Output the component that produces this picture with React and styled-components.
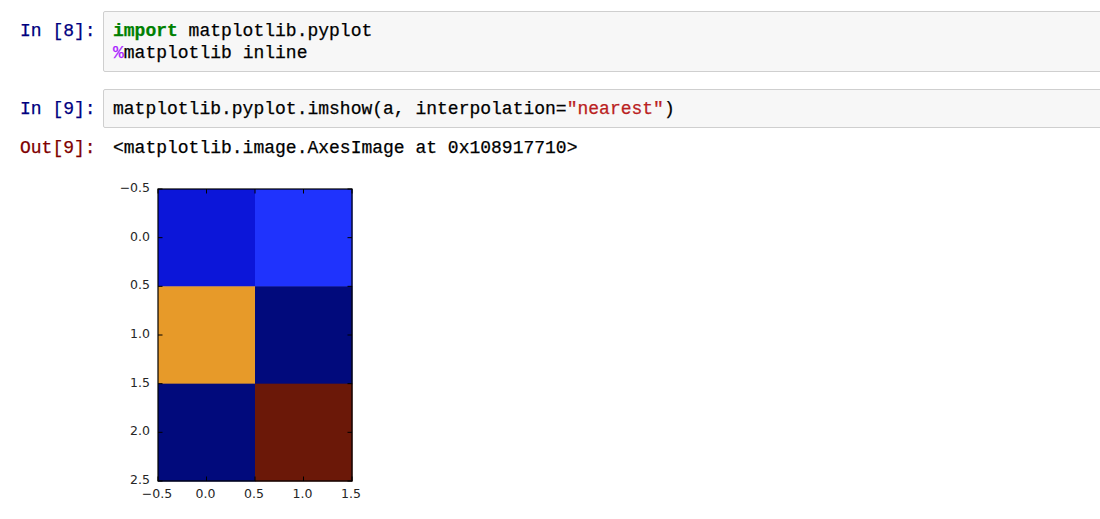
import styled, { createGlobalStyle } from "styled-components";

const GlobalStyle = createGlobalStyle`
  html, body {
    margin: 0;
    padding: 0;
    background: #fff;
    overflow: hidden;
  }
`;

const mono = `"Liberation Mono", "Courier New", monospace`;

const Notebook = styled.div`
  width: 1130px;
  padding: 11px 0 0 20px;
  font-family: ${mono};
  font-size: 18px;
  line-height: 22px;
  color: #000;
  -webkit-text-stroke: 0.25px currentColor;
`;

const Cell = styled.div`
  display: flex;
  align-items: flex-start;
  margin-bottom: ${props => props.gap || 0}px;
`;

const Prompt = styled.div`
  width: 83px;
  flex-shrink: 0;
  padding-top: ${props => props.top || 0}px;
  color: ${props => (props.out ? "#800000" : "#000080")};
  white-space: pre;
`;

const InputArea = styled.div`
  flex: 1;
  background: #f7f7f7;
  border: 1px solid #cfcfcf;
  border-radius: 2px;
  padding: 8px 9px 7px;
  white-space: pre;
`;

const OutputArea = styled.div`
  flex: 1;
  padding-left: 10px;
  white-space: pre;
`;

const Keyword = styled.span`
  color: #008000;
  font-weight: 700;
`;

const Magic = styled.span`
  color: #aa22ff;
`;

const Str = styled.span`
  color: #ba2121;
`;

const PlotWrap = styled.div`
  margin: 2px 0 0 0;
  width: 260px;
  height: 350px;
  -webkit-text-stroke: 0;
`;

const cells = [
  ["#0c16d9", "#1f33fd"],
  ["#e79a29", "#010a7c"],
  ["#010a7c", "#6b1808"],
];

const labelFont = "DejaVu Sans, Verdana, sans-serif";

const ImshowPlot = () => {
  const x0 = 45;
  const y0 = 28;
  const w = 194;
  const h = 292;
  const cw = w / 2;
  const ch = h / 3;
  const xTicks = ["\u22120.5", "0.0", "0.5", "1.0", "1.5"];
  const yTicks = ["\u22120.5", "0.0", "0.5", "1.0", "1.5", "2.0", "2.5"];
  const tick = 4.5;
  return (
    <svg width="260" height="350" viewBox="0 0 260 350">
      {cells.map((row, r) =>
        row.map((c, col) => (
          <rect
            key={`${r}-${col}`}
            x={x0 + col * cw}
            y={y0 + r * ch}
            width={cw + 0.5}
            height={ch + 0.5}
            fill={c}
          />
        ))
      )}
      {xTicks.map((t, i) => {
        const x = x0 + (i * w) / 4;
        return (
          <g key={`x${i}`}>
            <line x1={x} y1={y0} x2={x} y2={y0 + tick} stroke="#000" strokeWidth="1" />
            <line x1={x} y1={y0 + h} x2={x} y2={y0 + h - tick} stroke="#000" strokeWidth="1" />
            <text
              x={x - 1}
              y={y0 + h + 17}
              textAnchor="middle"
              fontFamily={labelFont}
              fontSize="12.5"
              fill="#262626"
            >
              {t}
            </text>
          </g>
        );
      })}
      {yTicks.map((t, i) => {
        const y = y0 + (i * h) / 6;
        return (
          <g key={`y${i}`}>
            <line x1={x0} y1={y} x2={x0 + tick} y2={y} stroke="#000" strokeWidth="1" />
            <line x1={x0 + w} y1={y} x2={x0 + w - tick} y2={y} stroke="#000" strokeWidth="1" />
            <text
              x={x0 - 8}
              y={y + 3}
              textAnchor="end"
              fontFamily={labelFont}
              fontSize="12.5"
              fill="#262626"
            >
              {t}
            </text>
          </g>
        );
      })}
      <rect x={x0} y={y0} width={w} height={h} fill="none" stroke="#000" strokeWidth="1.2" />
    </svg>
  );
};

const App = () => {
  return (
    <>
      <GlobalStyle />
      <Notebook>
        <Cell gap={17}>
          <Prompt top={9}>In [8]:</Prompt>
          <InputArea>
            <Keyword>import</Keyword> matplotlib.pyplot{"\n"}
            <Magic>%</Magic>matplotlib inline
          </InputArea>
        </Cell>
        <Cell gap={9}>
          <Prompt top={9}>In [9]:</Prompt>
          <InputArea>
            matplotlib.pyplot.imshow(a, interpolation=<Str>"nearest"</Str>)
          </InputArea>
        </Cell>
        <Cell>
          <Prompt out>Out[9]:</Prompt>
          <OutputArea>
            {"<matplotlib.image.AxesImage at 0x108917710>"}
            <PlotWrap>
              <ImshowPlot />
            </PlotWrap>
          </OutputArea>
        </Cell>
      </Notebook>
    </>
  );
};

export default App;
